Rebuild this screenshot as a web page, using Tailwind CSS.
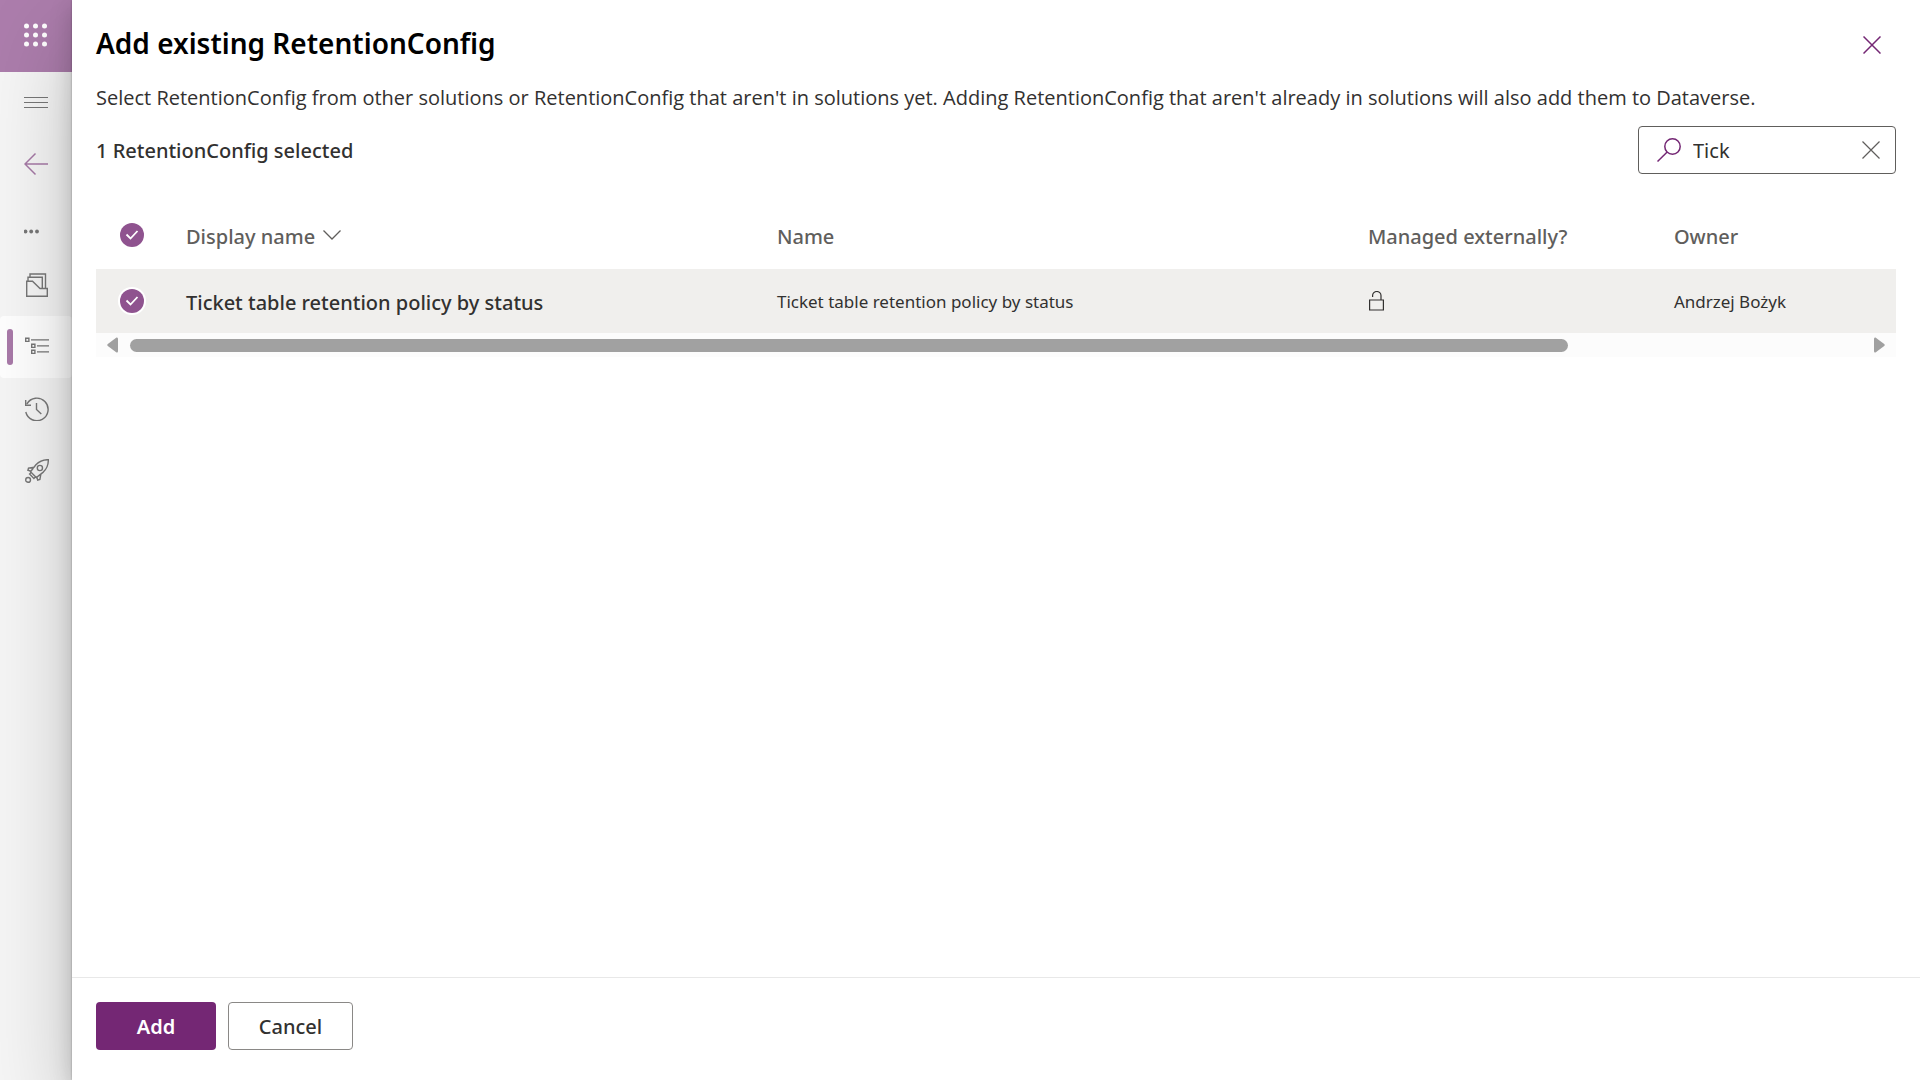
<!DOCTYPE html>
<html lang="en">
<head>
<meta charset="utf-8">
<meta name="viewport" content="width=device-width, initial-scale=1">
<title>Add existing RetentionConfig</title>
<script src="https://cdn.jsdelivr.net/npm/@tailwindcss/browser@4"></script>
</head>
<body class="flex h-screen overflow-hidden bg-white font-['Noto_Sans','Open_Sans',sans-serif] text-xl text-[#323130]">

<!-- App rail -->
<aside class="flex w-[72px] shrink-0 flex-col bg-[#f6f6f6] text-[#777]">
  <button aria-label="App launcher" class="grid h-[72px] place-items-center bg-[#ac7dac] pb-0.5 text-white">
    <svg class="size-6" viewBox="0 0 24 24" fill="currentColor"><circle cx="2.500" cy="3" r="2.500"/><circle cx="11.500" cy="3" r="2.500"/><circle cx="20.500" cy="3" r="2.500"/><circle cx="2.500" cy="12" r="2.500"/><circle cx="11.500" cy="12" r="2.500"/><circle cx="20.500" cy="12" r="2.500"/><circle cx="2.500" cy="21" r="2.500"/><circle cx="11.500" cy="21" r="2.500"/><circle cx="20.500" cy="21" r="2.500"/></svg>
  </button>
  <nav class="flex flex-col" aria-label="Solution">
    <button aria-label="Expand navigation" class="grid h-[62px] place-items-center">
      <svg class="size-6" viewBox="0 0 24 24" stroke="currentColor"><path d="M0 6.500h24M0 11.500h24M0 16.500h24"/></svg>
    </button>
    <a href="#" aria-label="Back" class="grid h-[62px] place-items-center pb-0.5 text-[#a67aa6]">
      <svg class="size-6" viewBox="0 0 24 24" fill="none" stroke="currentColor" stroke-width="1.500"><path d="M24 12H1M11.500 1.500L1 12 11.500 22.500"/></svg>
    </a>
    <button aria-label="More" class="mt-3 grid h-[46px] place-items-center">
      <svg class="size-6" viewBox="0 0 24 24" fill="currentColor"><circle cx="1.500" cy="12.500" r="1.900"/><circle cx="7.200" cy="12.500" r="1.900"/><circle cx="13" cy="12.500" r="1.900"/></svg>
    </button>
    <a href="#" aria-label="Overview" class="grid h-[62px] place-items-center pl-0.5">
      <svg class="size-6" viewBox="0 0 24 24" fill="none" stroke="currentColor" stroke-width="1.400"><path d="M1.700 8.200h5.800l7.500 7.300h7.300v7.800H1.700zM3 8V4.200h14.300v11M5 4V1h15.500v14.300"/></svg>
    </a>
    <a href="#" aria-label="Objects" aria-current="page" class="relative grid h-[62px] place-items-center rounded bg-white pl-0.5">
      <span class="absolute left-[7px] top-[13px] h-9 w-1.5 rounded-full bg-[#a97aa9]"></span>
      <svg class="size-6" viewBox="0 0 24 24" fill="none" stroke="currentColor" stroke-width="1.400"><path d="M.7 3.200h3.200v3.200H.7zM6.700 9.200h3.200v3.200H6.700zM6.700 15.200h3.200v3.200H6.700zM6 4.900h18M12 10.900h12M12 16.900h12"/></svg>
    </a>
    <a href="#" aria-label="History" class="grid h-[62px] place-items-center pl-0.5">
      <svg class="size-6" viewBox="0 0 24 24" fill="none" stroke="currentColor" stroke-width="1.400"><path d="M.8 15A11.300 11.300 0 1 0 2 6.800M.7 3v5.300H6M11.500 6v6.500l4.800 4.600"/></svg>
    </a>
    <a href="#" aria-label="Pipelines" class="grid h-[62px] place-items-center pl-0.5">
      <svg class="size-6" viewBox="0 0 24 24" fill="none" stroke="currentColor" stroke-width="1.400"><path d="M23.300.7c.2 5.500-2 9.500-5 12.400l-7 5.400-5.800-5.800 5.400-7C14 2.500 17.800.5 23.300.7zM9.300 8.200L3.500 9.100l-.6 2.100 3 .9M15.900 14.800l-1 5.600-2.200.7-.8-2.900M6.200 13.500l-1.600 1.600 4.300 4.300 1.600-1.600"/><circle cx="14.900" cy="9" r="2.600"/><circle cx="3.100" cy="20.900" r="2.400"/></svg>
    </a>
  </nav>
</aside>

<!-- Panel -->
<main class="relative flex min-w-0 flex-1 flex-col bg-white shadow-[0_0_2px_rgba(0,0,0,0.3),0_38px_86px_rgba(0,0,0,0.22),0_7px_22px_rgba(0,0,0,0.18)]">
  <div class="flex min-h-0 flex-1 flex-col px-6">
    <header class="flex items-start justify-between pt-[21px]">
      <h1 class="text-[28px]/11 font-semibold text-black">Add existing RetentionConfig</h1>
      <button aria-label="Close" class="grid size-12 place-items-center text-[#742774]">
        <svg class="size-[18px]" viewBox="0 0 18 18" stroke="currentColor" stroke-width="1.500"><path d="M.5.500l17 17M17.500.500l-17 17"/></svg>
      </button>
    </header>
    <p class="mt-[15px] font-['Open_Sans',sans-serif] leading-7">Select RetentionConfig from other solutions or RetentionConfig that aren't in solutions yet. Adding RetentionConfig that aren't already in solutions will also add them to Dataverse.</p>
    <div class="mt-3.5 flex items-center justify-between">
      <p class="pt-0.5 font-medium">1 RetentionConfig selected</p>
      <label class="flex h-12 w-[258px] items-center rounded-sm border border-[#605e5c] pl-[18px]">
        <svg class="size-6 shrink-0 text-[#742774]" viewBox="0 0 24 24" fill="none" stroke="currentColor" stroke-width="1.500"><circle cx="15.500" cy="8.500" r="7.700"/><path d="M10.200 14L.5 23.500"/></svg>
        <input type="text" value="Tick" aria-label="Search" class="min-w-0 flex-1 pt-0.5 pl-3 outline-none">
        <button aria-label="Clear search" class="grid size-12 shrink-0 place-items-center text-[#605e5c]">
          <svg class="size-[18px]" viewBox="0 0 18 18" stroke="currentColor" stroke-width="1.200"><path d="M.5.500l17 17M17.500.500l-17 17"/></svg>
        </button>
      </label>
    </div>

    <table class="mt-[26px] w-full table-fixed text-left">
      <colgroup><col class="w-[5%]"><col class="w-[32.83%]"><col class="w-[32.83%]"><col class="w-[17%]"><col></colgroup>
      <thead class="text-[#605e5c]">
        <tr class="h-[69px]">
          <th class="pl-6">
            <span class="grid w-6 place-items-center">
              <input type="checkbox" checked aria-label="Select all rows" class="col-start-1 row-start-1 size-6 appearance-none rounded-full bg-[#8f538f]">
              <svg class="pointer-events-none col-start-1 row-start-1 size-6" viewBox="0 0 24 24" fill="none" stroke="#fff" stroke-width="1.800"><path d="M6.500 11.500l4 4 7-7.500"/></svg>
            </span>
          </th>
          <th class="pt-1 font-medium"><button class="flex items-center gap-2">Display name
            <svg class="mb-1 h-[10px] w-[18px]" viewBox="0 0 18 10" fill="none" stroke="currentColor" stroke-width="1.300"><path d="M.5.500L9 9l8.500-8.500"/></svg></button></th>
          <th class="pt-1 font-medium">Name</th>
          <th class="pt-1 font-medium">Managed externally?</th>
          <th class="pt-1 font-medium">Owner</th>
        </tr>
      </thead>
      <tbody>
        <tr class="h-16 bg-[#f0efed] text-[17px]">
          <td class="pl-6">
            <span class="grid w-6 place-items-center">
              <input type="checkbox" checked aria-label="Select Ticket table retention policy by status" class="col-start-1 row-start-1 size-6 appearance-none rounded-full bg-[#8f538f] ring-2 ring-white">
              <svg class="pointer-events-none col-start-1 row-start-1 size-6" viewBox="0 0 24 24" fill="none" stroke="#fff" stroke-width="1.800"><path d="M6.500 11.500l4 4 7-7.500"/></svg>
            </span>
          </td>
          <td class="pt-1 text-xl font-medium">Ticket table retention policy by status</td>
          <td class="pt-0.5">Ticket table retention policy by status</td>
          <td>
            <svg class="ml-px h-5 w-[15px]" role="img" aria-label="Unlocked" viewBox="0 0 15 20" fill="none" stroke="currentColor" stroke-width="1.200"><path d="M.6 9h13.800v10H.6zM12 9V4.500a4.200 4 0 0 0-8.400 0V6"/></svg>
          </td>
          <td class="pt-0.5">Andrzej Bożyk</td>
        </tr>
      </tbody>
    </table>
    <!-- Horizontal scroll bar -->
    <div class="flex h-6 items-center gap-3 bg-[#fcfcfc] px-[11px] text-[#a0a0a0]">
      <button aria-label="Scroll left" class="shrink-0"><svg class="h-4 w-[11px]" viewBox="0 0 11 16" fill="currentColor"><path d="M9.500.5Q11 0 11 2v12q0 2-1.500 1.500L.8 9Q-.3 8 .8 7z"/></svg></button>
      <div class="flex-1"><div class="h-[13px] w-[83%] rounded-full bg-[#a1a1a1]"></div></div>
      <button aria-label="Scroll right" class="shrink-0"><svg class="h-4 w-[11px]" viewBox="0 0 11 16" fill="currentColor"><path d="M1.500.5Q0 0 0 2v12q0 2 1.500 1.500L10.200 9q1.100-1 0-2z"/></svg></button>
    </div>
  </div>

  <footer class="flex gap-3 border-t border-[#e8e8e8] px-6 pt-6 pb-[30px]">
    <button class="h-12 w-[120px] rounded-sm bg-[#742774] pt-0.5 font-semibold text-white">Add</button>
    <button class="h-12 w-[125px] rounded-sm border border-[#8a8886] pt-0.5 font-medium">Cancel</button>
  </footer>
</main>
</body>
</html>
